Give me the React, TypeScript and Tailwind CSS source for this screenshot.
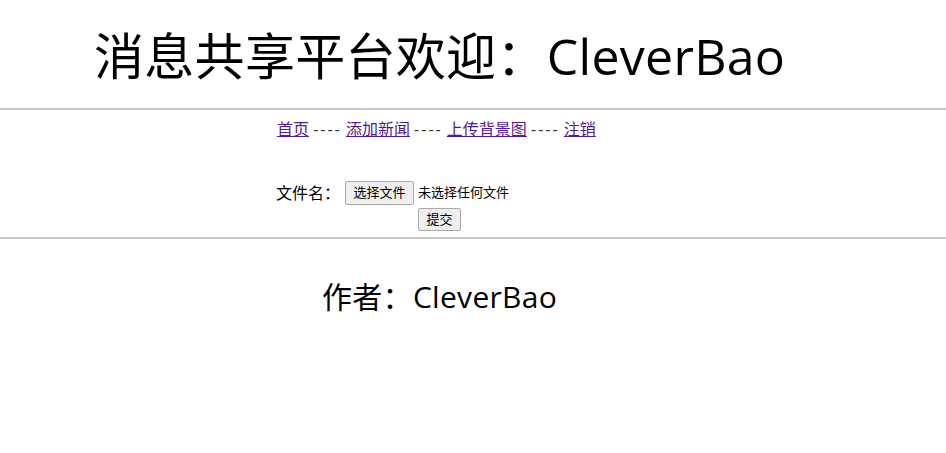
import React from 'react';

const font = { fontFamily: '"Open Sans", "Noto Sans CJK SC", sans-serif' };

const App = () => {
  const links = ['首页', '添加新闻', '上传背景图', '注销'];

  return (
    <div className="w-[946px] h-[453px] bg-white text-black overflow-hidden" style={font}>
      {/* Title */}
      <div className="h-[108px] pl-[94px] pt-[21px]">
        <h1 className="text-[50px] leading-[70px] font-normal whitespace-nowrap tracking-[0.3px]">
          消息共享平台欢迎：CleverBao
        </h1>
      </div>
      <div className="border-t-2 border-[#c8c8c8]" />

      {/* Nav */}
      <div className="h-[30px] pl-[277px] pt-[8px] text-[16px] leading-[22px] text-[#333]">
        {links.map((l, i) => (
          <span key={l}>
            {i > 0 && <span> <span className="tracking-[2px]">----</span> </span>}
            <a href="#" className="text-[#551a8b] underline">{l}</a>
          </span>
        ))}
      </div>

      {/* Upload form */}
      <div className="h-[97px] pl-[276px] pt-[41px]">
        <div className="flex items-center h-[24px]">
          <span className="text-[16px] w-[69px]">文件名：</span>
          <button className="h-[24px] w-[69px] text-[13px] bg-[#efefef] border border-[#a9a9a9] rounded-[2px]">
            选择文件
          </button>
          <span className="text-[13px] ml-[4px]">未选择任何文件</span>
        </div>
        <div className="pl-[142px] pt-[1px]">
          <button className="h-[23px] w-[43px] text-[13px] bg-[#efefef] border border-[#a9a9a9] rounded-[2px]">
            提交
          </button>
        </div>
      </div>
      <div className="border-t-2 border-[#c8c8c8]" />

      {/* Author */}
      <div className="pl-[322px] pt-[38px] text-[30px] leading-[40px] tracking-[0.3px]">作者：CleverBao</div>
    </div>
  );
};

export default App;
